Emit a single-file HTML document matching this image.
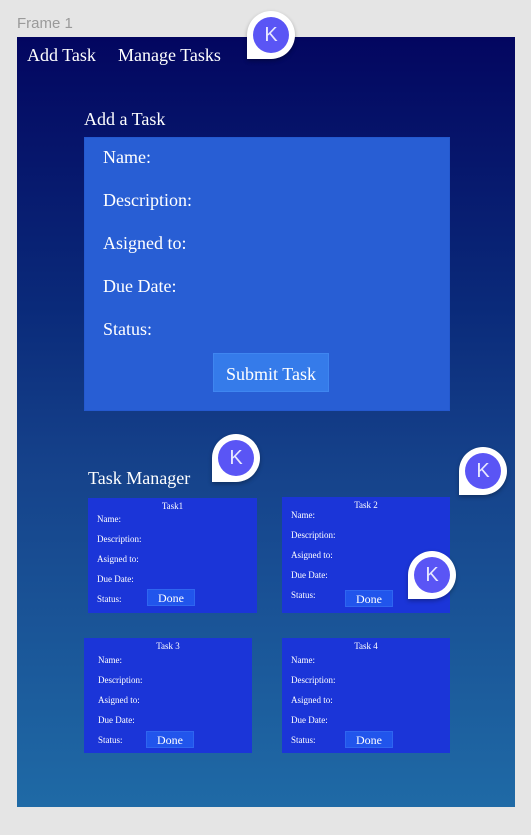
<!DOCTYPE html>
<html><head><style>
body{margin:0;width:531px;height:835px;background:#e5e5e5;position:relative;overflow:hidden;font-family:"Liberation Serif",serif;color:#fff}
.a{position:absolute}
.lbl{font-family:"Liberation Sans",sans-serif;color:#9a9a9a;font-size:15px;left:17px;top:15px}
.frame{left:17px;top:37px;width:498px;height:770px;background:linear-gradient(#030660 0%,#0a2a7a 35%,#15418a 55%,#1f6aa6 100%)}
.form{left:84px;top:137px;width:366px;height:274px;background:#285ed4;border:1px solid #2459cf;box-sizing:border-box}
.f{left:103px;font-size:18px}
.btn{left:213px;top:353px;width:116px;height:39px;background:#357bea;border:1px solid #3f86f0;box-sizing:border-box;font-size:18px;text-align:center;line-height:41px}
.card{background:#1b35d8;font-size:9px}
.card .t{position:absolute;width:100%;text-align:center;top:3px}
.card .r{position:absolute;left:9px}
.done{position:absolute;background:#2155ec;border:1px solid #2f66f0;box-sizing:border-box;width:48px;height:17px;text-align:center;font-size:12px;line-height:17px}
.pin{width:48px;height:48px;background:#fff;border-radius:24px 24px 24px 0;box-shadow:0 2px 4px rgba(0,0,0,.3)}
.pin div{position:absolute;left:6px;top:6px;width:36px;height:36px;border-radius:50%;background:#5a55f5;font-family:"Liberation Sans",sans-serif;font-size:20px;text-align:center;line-height:36px;color:#e8e8ff}
</style></head><body>
<div class="a lbl">Frame 1</div>
<div class="a frame"></div>
<div class="a" style="left:27px;top:45px;font-size:18px">Add Task</div>
<div class="a" style="left:118px;top:45px;font-size:18px">Manage Tasks</div>
<div class="a" style="left:84px;top:109px;font-size:18px">Add a Task</div>
<div class="a form"></div>
<div class="a f" style="top:147px">Name:</div>
<div class="a f" style="top:190px">Description:</div>
<div class="a f" style="top:233px">Asigned to:</div>
<div class="a f" style="top:276px">Due Date:</div>
<div class="a f" style="top:319px">Status:</div>
<div class="a btn">Submit Task</div>
<div class="a" style="left:88px;top:468px;font-size:18px">Task Manager</div>

<div class="a card" style="left:88px;top:498px;width:169px;height:115px"><div class="t">Task1</div><div class="r" style="top:16px">Name:</div><div class="r" style="top:36px">Description:</div><div class="r" style="top:56px">Asigned to:</div><div class="r" style="top:76px">Due Date:</div><div class="r" style="top:96px">Status:</div><div class="done" style="left:59px;top:91px">Done</div></div>
<div class="a card" style="left:282px;top:497px;width:168px;height:116px"><div class="t">Task 2</div><div class="r" style="top:13px">Name:</div><div class="r" style="top:33px">Description:</div><div class="r" style="top:53px">Asigned to:</div><div class="r" style="top:73px">Due Date:</div><div class="r" style="top:93px">Status:</div><div class="done" style="left:63px;top:93px">Done</div></div>
<div class="a card" style="left:84px;top:638px;width:168px;height:115px"><div class="t">Task 3</div><div class="r" style="left:14px;top:17px">Name:</div><div class="r" style="left:14px;top:37px">Description:</div><div class="r" style="left:14px;top:57px">Asigned to:</div><div class="r" style="left:14px;top:77px">Due Date:</div><div class="r" style="left:14px;top:97px">Status:</div><div class="done" style="left:62px;top:93px">Done</div></div>
<div class="a card" style="left:282px;top:638px;width:168px;height:115px"><div class="t">Task 4</div><div class="r" style="top:17px">Name:</div><div class="r" style="top:37px">Description:</div><div class="r" style="top:57px">Asigned to:</div><div class="r" style="top:77px">Due Date:</div><div class="r" style="top:97px">Status:</div><div class="done" style="left:63px;top:93px">Done</div></div>

<div class="a pin" style="left:247px;top:11px"><div>K</div></div>
<div class="a pin" style="left:212px;top:434px"><div>K</div></div>
<div class="a pin" style="left:459px;top:447px"><div>K</div></div>
<div class="a pin" style="left:408px;top:551px"><div>K</div></div>
</body></html>
